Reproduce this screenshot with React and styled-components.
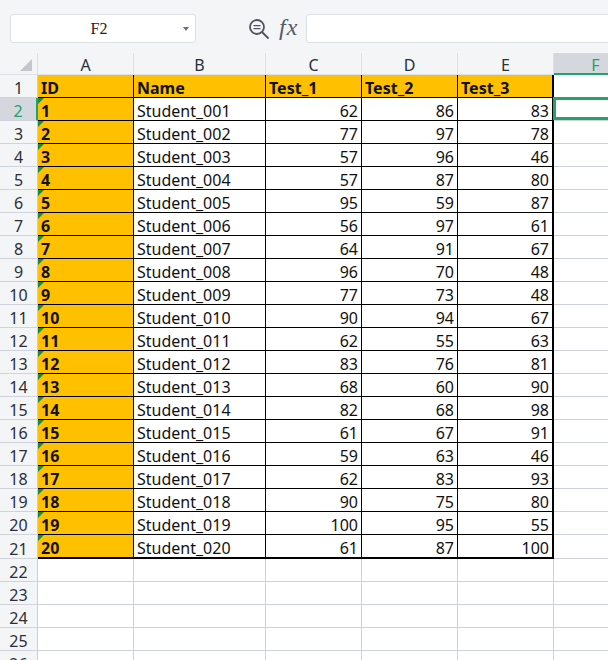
import React from "react";
import styled, { createGlobalStyle, css } from "styled-components";

const GlobalStyle = createGlobalStyle`
  html, body { margin: 0; padding: 0; background: #ffffff; }
  body { font-family: "Noto Sans", "Liberation Sans", sans-serif; overflow: hidden; }
  * { box-sizing: border-box; }
`;

const GREEN = "#21a36a";
const GRID = "#cdd1da";

const Page = styled.div`
  width: 608px;
  height: 660px;
  overflow: hidden;
  background: #fff;
`;

const Toolbar = styled.div`
  height: 53px;
  background: #f4f5f7;
  display: flex;
  align-items: flex-start;
  padding: 14px 0 0 10px;
  overflow: hidden;
`;

const NameBox = styled.div`
  position: relative;
  width: 186px;
  height: 29px;
  background: #fff;
  border: 1px solid #dcdfe4;
  border-radius: 3px;
  display: flex;
  align-items: center;
  justify-content: center;
  font-family: "Liberation Serif", "DejaVu Serif", serif;
  font-size: 16px;
  color: #222;
  padding-right: 8px;
`;

const Caret = styled.span`
  position: absolute;
  right: 6px;
  top: 12px;
  width: 0;
  height: 0;
  border-left: 3px solid transparent;
  border-right: 3px solid transparent;
  border-top: 4px solid #6b7080;
`;

const Tools = styled.div`
  display: flex;
  align-items: center;
  gap: 9px;
  height: 29px;
  margin-left: 52px;
  color: #4a4f5a;
`;

const Fx = styled.span`
  font-family: "Liberation Serif", "DejaVu Serif", serif;
  font-style: italic;
  font-size: 24px;
  color: #555a66;
  line-height: 1;
  margin-top: -4px;
  letter-spacing: 1px;
`;

const Formula = styled.div`
  flex: 1;
  height: 29px;
  margin-left: 8px;
  margin-right: -10px;
  background: #fff;
  border: 1px solid #dcdfe4;
  border-radius: 3px;
`;

const Sheet = styled.div`
  display: grid;
  grid-template-columns: 38px 96px 132px 96px 96px 96px 84px;
  width: 638px;
  font-size: 16px;
  color: #111;
`;

const Corner = styled.div`
  height: 22px;
  background: #f4f5f7;
  border-right: 1px solid #dfe1e6;
  border-bottom: 1px solid #dfe1e6;
  position: relative;
  &::after {
    content: "";
    position: absolute;
    right: 5px;
    bottom: 3px;
    width: 0;
    height: 0;
    border-left: 12px solid transparent;
    border-bottom: 12px solid #c3c6cc;
  }
`;

const ColHead = styled.div`
  height: 22px;
  background: ${(p) => (p.$active ? "#d4d7dd" : "#f4f5f7")};
  color: ${(p) => (p.$active ? GREEN : "#2a2f3a")};
  border-right: 1px solid #dfe1e6;
  border-bottom: ${(p) => (p.$active ? `2px solid ${GREEN}` : "1px solid #dfe1e6")};
  display: flex;
  align-items: center;
  justify-content: center;
  line-height: 1;
  padding-top: 3px;
`;

const RowHead = styled.div`
  height: ${(p) => (p.$last ? 24 : 23)}px;
  background: ${(p) => (p.$active ? "#d4d7dd" : "#f4f5f7")};
  color: ${(p) => (p.$active ? GREEN : "#2a2f3a")};
  border-right: ${(p) => (p.$active ? `2px solid ${GREEN}` : "1px solid #c9cdd6")};
  border-bottom: 1px solid #cfd3db;
  display: flex;
  align-items: center;
  justify-content: center;
  padding-top: 4px;
  line-height: 1;
`;

const Cell = styled.div`
  position: relative;
  height: ${(p) => (p.$last ? 24 : 23)}px;
  display: flex;
  align-items: flex-end;
  justify-content: ${(p) => (p.$num ? "flex-end" : "flex-start")};
  padding: 0 3px 0 3px;
  line-height: 18px;
  white-space: nowrap;
  font-weight: ${(p) => (p.$bold ? 700 : 400)};
  background: ${(p) => (p.$fill ? "#ffc000" : "#fff")};
  ${(p) =>
    p.$data
      ? css`
          border-right: ${p.$edge ? 2 : 1}px solid #000;
          border-bottom: ${p.$last ? 2 : 1}px solid #000;
        `
      : css`
          border-right: 1px solid ${GRID};
          border-bottom: 1px solid ${GRID};
        `}
  ${(p) =>
    p.$flag &&
    css`
      &::before {
        content: "";
        position: absolute;
        left: 0;
        top: 0;
        width: 0;
        height: 0;
        border-top: 6px solid #1b8a3e;
        border-right: 6px solid transparent;
      }
    `}
`;

const Selection = styled.div`
  position: absolute;
  left: -1px;
  top: -1px;
  bottom: 0;
  right: -2px;
  border: 3px solid ${GREEN};
  pointer-events: none;
`;

const ZoomIcon = () => (
  <svg width="22" height="22" viewBox="0 0 22 22" fill="none" stroke="#4f5461" strokeWidth="1.8" strokeLinecap="round">
    <circle cx="9" cy="9" r="7" />
    <line x1="14" y1="14" x2="20" y2="20" />
    <line x1="6" y1="7.6" x2="12" y2="7.6" strokeWidth="1.4" />
    <line x1="6" y1="10.6" x2="12" y2="10.6" strokeWidth="1.4" />
  </svg>
);

const rows = [
  [62, 86, 83], [77, 97, 78], [57, 96, 46], [57, 87, 80], [95, 59, 87],
  [56, 97, 61], [64, 91, 67], [96, 70, 48], [77, 73, 48], [90, 94, 67],
  [62, 55, 63], [83, 76, 81], [68, 60, 90], [82, 68, 98], [61, 67, 91],
  [59, 63, 46], [62, 83, 93], [90, 75, 80], [100, 95, 55], [61, 87, 100],
];

const cols = ["A", "B", "C", "D", "E", "F"];

export default function App() {
  const pad = (n) => String(n).padStart(3, "0");
  return (
    <Page>
      <GlobalStyle />
      <Toolbar>
        <NameBox>
          F2
          <Caret />
        </NameBox>
        <Tools>
          <ZoomIcon />
          <Fx>fx</Fx>
        </Tools>
        <Formula />
      </Toolbar>
      <Sheet>
        <Corner />
        {cols.map((c) => (
          <ColHead key={c} $active={c === "F"}>{c}</ColHead>
        ))}

        <RowHead>1</RowHead>
        {["ID", "Name", "Test_1", "Test_2", "Test_3"].map((h, i) => (
          <Cell key={h} $data $fill $bold $edge={i === 4}>{h}</Cell>
        ))}
        <Cell />

        {rows.map((r, i) => {
          const last = i === rows.length - 1;
          return (
            <React.Fragment key={i}>
              <RowHead $active={i === 0} $last={last}>{i + 2}</RowHead>
              <Cell $data $fill $bold $flag $last={last}>{i + 1}</Cell>
              <Cell $data $last={last}>Student_{pad(i + 1)}</Cell>
              <Cell $data $num $last={last}>{r[0]}</Cell>
              <Cell $data $num $last={last}>{r[1]}</Cell>
              <Cell $data $num $edge $last={last}>{r[2]}</Cell>
              <Cell $last={last}>{i === 0 && <Selection />}</Cell>
            </React.Fragment>
          );
        })}

        {[22, 23, 24, 25, 26].map((n) => (
          <React.Fragment key={n}>
            <RowHead>{n}</RowHead>
            {cols.map((c) => (
              <Cell key={c} />
            ))}
          </React.Fragment>
        ))}
      </Sheet>
    </Page>
  );
}
